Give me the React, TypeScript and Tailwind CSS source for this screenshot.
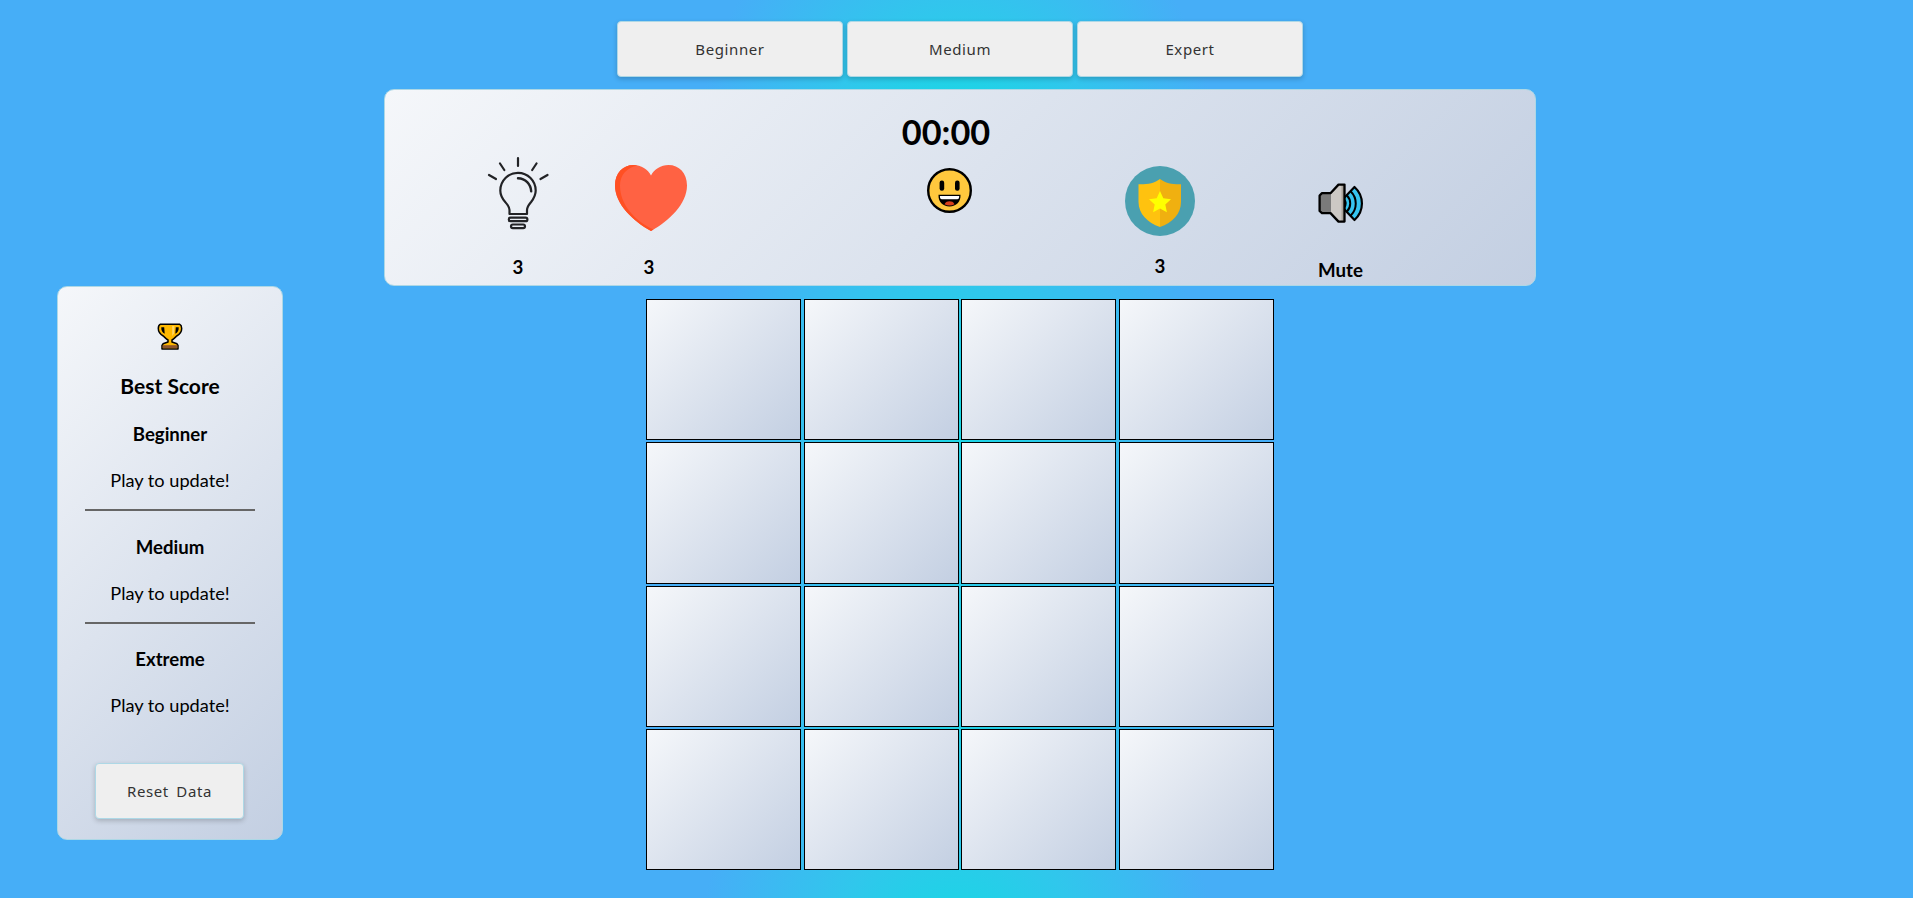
import type { ReactNode } from "react";

const LATO = "font-['Lato','Liberation_Sans',sans-serif]";
const BUTTON =
  "h-14 rounded-[4px] border border-[#add8e6] bg-[#efefef] text-[15px] tracking-[0.6px] [word-spacing:3px] text-[#333] shadow-[0_2px_5px_rgba(0,0,0,0.2)] font-['Noto_Sans','DejaVu_Sans',sans-serif]";
const SURFACE = "bg-[linear-gradient(135deg,#f5f7fa_0%,#c3cfe2_100%)]";

function Bulb() {
  return (
    <svg width="62" height="74" viewBox="487 156 62 74" fill="none" stroke="#222326" strokeWidth="2.2" strokeLinecap="round" strokeLinejoin="round">
      <path d="M518 158v8M500 163.500l4.300 6.500M536.500 163.500l-4.300 6.500M489 175l7 4M547.500 175l-7 4" />
      <path d="M509.500 214v-4c0-3.200-2-5.400-4.300-8-3-3.500-4.900-6.500-4.900-11.500a17.700 17.700 0 0 1 35.400 0c0 5-1.900 8-4.600 11.500-2.200 2.700-4.100 4.800-4.100 8v4z" />
      <path d="M518 178.300c7.500.3 12.700 5.700 13.200 13" strokeWidth="2.400" />
      <rect x="508.800" y="217.600" width="18.600" height="3.600" rx="1.800" />
      <rect x="511" y="224.500" width="14" height="3.600" rx="1.800" />
    </svg>
  );
}

function Heart() {
  return (
    <svg width="72" height="66" viewBox="0 0 72 66">
      <path fill="#ff6243" d="M36 66C18 56 0 39 0 20.500 0 8 8 0 18.500 0 26 0 33 4.500 36 10.500 39 4.500 46 0 53.500 0 64 0 72 8 72 20.500 72 39 54 56 36 66z" />
      <path fill="#ff5023" d="M36 66C18 56 0 39 0 20.500 0 8 8 0 18.500 0c1.500 0 2.800.2 4 .5C12 2.500 5 10 5 20.500 5 39 19 55.500 38.500 64.600z" />
    </svg>
  );
}

function Smiley() {
  return (
    <svg width="45" height="45" viewBox="0 0 45 45">
      <circle cx="22.500" cy="22.500" r="21.300" fill="#ffc83d" stroke="#000" strokeWidth="2.400" />
      <rect x="12.600" y="12.600" width="4.600" height="10.200" rx="2.200" />
      <rect x="28" y="12.600" width="4.600" height="10.200" rx="2.200" />
      <path d="M11.500 26.800h22c.4 6.800-4.200 11.700-11 11.700s-11.400-4.900-11-11.700z" />
      <path fill="#fff" d="M12.900 28h19.300c0 2.400-.6 3.200-1.900 3.200H14.800c-1.300 0-1.900-.8-1.900-3.200z" />
      <path fill="#d8401c" d="M17.500 36.200c1.200-2.400 2.900-3 5-3s3.900.6 5 3c-3 1.700-7 1.700-10 0z" />
    </svg>
  );
}

function Shield() {
  return (
    <svg width="70" height="70" viewBox="0 0 70 70">
      <circle cx="35" cy="35" r="35" fill="#4aa0b0" />
      <path fill="#ffc20f" d="M35 13c-5.500 4.200-12.500 5.500-21.500 5.300V36c0 12 9 20.500 21.500 25z" />
      <path fill="#f0b010" d="M35 13c5.500 4.200 12.500 5.500 21 5.300V36c0 12-8.500 20.500-21 25z" />
      <path fill="#ffff00" d="M35 25l3.300 7.300 7.700.9-5.700 5.300 1.600 7.800L35 42.400l-6.900 3.900 1.600-7.800L24 33.200l7.700-.9z" />
    </svg>
  );
}

function Speaker() {
  return (
    <svg width="46" height="40" viewBox="0 0 46 40">
      <path fill="#36c5f0" stroke="#000" strokeWidth="2.200" strokeLinejoin="round" d="M26 15L36.500 4c9.900 9 9.900 24 0 33L26 26z" />
      <path fill="none" stroke="#000" strokeWidth="2" d="M32.800 8.500c6.600 6.500 6.600 17.500 0 24M29 12.500c4.300 4.500 4.300 11.500 0 16M26 16.500c2.200 2.500 2.200 5.500 0 8" />
      <path fill="#7a7a7a" d="M3.500 10.500H13v19H3.500L2 28V12z" />
      <path fill="#ccc8c4" d="M13 10.500L21 2h5.500v36H21l-8-8.500z" />
      <path fill="#aaa39b" d="M23.500 2h3v36h-3z" />
      <path fill="none" stroke="#000" strokeWidth="2.300" strokeLinejoin="round" d="M4 10.200h8.500L20.500 1.600h6v37h-6l-8-8.500H4L1.600 28V12.500z" />
    </svg>
  );
}

function Trophy() {
  return (
    <svg width="26" height="27" viewBox="0 0 26 27">
      <path fill="#ffb900" stroke="#000" strokeWidth="1.500" strokeLinejoin="round" d="M3.500 1.200h19c1.600.8 2.200 2 2.200 4.200 0 3.600-2 5.800-5 7.600-1.600 1.500-3 3-4.700 4v2l5 1.800 1 1.500v3.700H5v-3.700L6 20.800 11 19v-2c-1.700-1-3.100-2.500-4.700-4-3-1.800-5-4-5-7.600 0-2.200.6-3.400 2.200-4.200z" />
      <path fill="#ffd563" d="M15.200 3h2.200l-.4 7.500-1.800 2.500z" />
      <path fill="#8e562e" d="M5.700 22.200h14.600v3H5.700z" />
      <path d="M4.300 4.300h2.900l.5 6.500C5.400 9.800 4 7.500 4.300 4.300zM21.700 4.300h-2.900l-.5 6.500c2.300-1 3.700-3.300 3.400-6.500z" />
    </svg>
  );
}

function Stat({ icon, label, className }: { icon: ReactNode; label: string; className: string }) {
  return (
    <div className={`flex w-[100px] flex-col items-center ${className}`}>
      {icon}
      <span className="mt-auto text-[18.700px] leading-5 font-bold">{label}</span>
    </div>
  );
}

function Score({ level, last }: { level: string; last?: boolean }) {
  return (
    <section className={`flex h-[112.500px] w-[170px] flex-col items-center pt-[9px] ${last ? "" : "border-b-2 border-[#666]"}`}>
      <h3 className="mt-[14.500px] text-[18.600px] leading-6 font-bold">{level}</h3>
      <p className="mt-[22px] text-[18.200px] leading-6">Play to update!</p>
    </section>
  );
}

export default function App() {
  return (
    <div
      className={`flex h-[898px] overflow-hidden bg-[radial-gradient(circle_257px_at_center,#16d9e3_0%,#30c7ec_47%,#46aef7_100%)] bg-[length:100%_271px] text-black ${LATO}`}
    >
      <aside className={`mt-[286px] ml-[57px] flex h-[554px] w-[226px] shrink-0 flex-col items-center rounded-[10px] border border-[#add8e6] pt-[36px] ${SURFACE}`}>
        <Trophy />
        <h2 className="mt-[22px] text-[21px] leading-7 font-bold">Best Score</h2>
        <div className="-mt-[1.500px] flex flex-col">
          <Score level="Beginner" />
          <Score level="Medium" />
          <Score level="Extreme" last />
        </div>
        <button className={`mt-[27px] mr-px w-[149px] shrink-0 ${BUTTON}`}>Reset Data</button>
      </aside>

      <main className="ml-[101px] flex w-[1152px] shrink-0 flex-col items-center pt-[21px]">
        <nav className="flex gap-1">
          <button className={`w-[226px] ${BUTTON}`}>Beginner</button>
          <button className={`w-[226px] ${BUTTON}`}>Medium</button>
          <button className={`w-[226px] ${BUTTON}`}>Expert</button>
        </nav>

        <header className={`mt-3 flex h-[197px] w-full rounded-[10px] border border-[#add8e6] pl-[83px] ${SURFACE}`}>
          <Stat className="pt-[66px] pb-[8px]" icon={<Bulb />} label="3" />
          <Stat className="ml-[31px] pt-[75px] pb-[8px]" icon={<div className="pl-1"><Heart /></div>} label="3" />
          <div className="ml-[197px] flex w-[100px] flex-col items-center pt-[21px]">
            <time className="text-[34.300px] leading-[42px] font-bold">00:00</time>
            <div className="mt-[15px] pl-[6px]">
              <Smiley />
            </div>
          </div>
          <Stat className="ml-[114px] pt-[76px] pb-[9px]" icon={<Shield />} label="3" />
          <Stat className="ml-[80.500px] pt-[93px] pb-[5px]" icon={<Speaker />} label="Mute" />
        </header>

        <div className="mt-[13px] grid h-[571px] w-[628px] grid-cols-4 grid-rows-4 gap-x-[2.500px] gap-y-[2px]">
          {Array.from({ length: 16 }, (_, i) => (
            <div key={i} className={`border border-black ${SURFACE}`} />
          ))}
        </div>
      </main>
    </div>
  );
}
